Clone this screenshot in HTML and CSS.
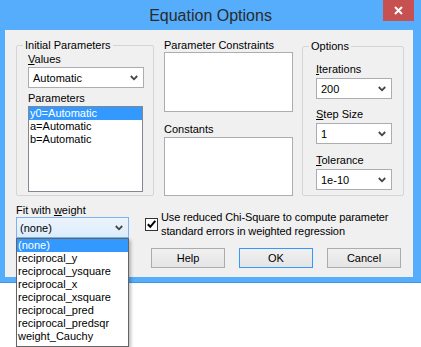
FILE: index.html
```html
<!DOCTYPE html>
<html>
<head>
<meta charset="utf-8">
<link rel="stylesheet" href="styles.css">
</head>
<body>
<div class="page">
<div class="window">
  <div class="titlebar">
    <span class="title">Equation Options</span>
    <div class="close">
      <svg width="9" height="9" viewBox="0 0 9 9"><path d="M1 1 L8 8 M8 1 L1 8" stroke="#fff" stroke-width="2" fill="none"/></svg>
    </div>
  </div>
  <div class="client">
    <div class="top-row">
      <fieldset class="group group-init">
        <legend>Initial Parameters</legend>
        <div class="inner inner-init">
          <div class="lbl"><u>V</u>alues</div>
          <div class="combo combo-values"><span>Automatic</span><svg class="chev" width="8" height="6" viewBox="0 0 8 6"><path d="M0.8 1 L4 4.3 L7.2 1" stroke="#444" stroke-width="1.8" fill="none"/></svg></div>
          <div class="lbl lbl-params">Parameters</div>
          <div class="listbox">
            <div class="item sel">y0=Automatic</div>
            <div class="item">a=Automatic</div>
            <div class="item">b=Automatic</div>
          </div>
        </div>
      </fieldset>
      <div class="mid">
        <div class="lbl">Parameter Constraints</div>
        <div class="edit edit1"></div>
        <div class="lbl lbl-const">Constants</div>
        <div class="edit edit2"></div>
      </div>
      <fieldset class="group group-opt">
        <legend>Options</legend>
        <div class="inner inner-opt">
          <div class="lbl lbl-first"><u>I</u>terations</div>
          <div class="combo combo-opt"><span>200</span><svg class="chev" width="8" height="6" viewBox="0 0 8 6"><path d="M0.8 1 L4 4.3 L7.2 1" stroke="#444" stroke-width="1.8" fill="none"/></svg></div>
          <div class="lbl lbl-next"><u>S</u>tep Size</div>
          <div class="combo combo-opt"><span>1</span><svg class="chev" width="8" height="6" viewBox="0 0 8 6"><path d="M0.8 1 L4 4.3 L7.2 1" stroke="#444" stroke-width="1.8" fill="none"/></svg></div>
          <div class="lbl lbl-last"><u>T</u>olerance</div>
          <div class="combo combo-opt"><span>1e-10</span><svg class="chev" width="8" height="6" viewBox="0 0 8 6"><path d="M0.8 1 L4 4.3 L7.2 1" stroke="#444" stroke-width="1.8" fill="none"/></svg></div>
        </div>
      </fieldset>
    </div>
    <div class="bottom-row">
      <div class="weight">
        <div class="lbl">Fit with <u>w</u>eight</div>
        <div class="combo combo-focus"><span>(none)</span><svg class="chev" width="8" height="6" viewBox="0 0 8 6"><path d="M0.8 1 L4 4.3 L7.2 1" stroke="#444" stroke-width="1.8" fill="none"/></svg></div>
        <div class="droplist">
          <div class="ditem sel">(none)</div>
          <div class="ditem">reciprocal_y</div>
          <div class="ditem">reciprocal_ysquare</div>
          <div class="ditem">reciprocal_x</div>
          <div class="ditem">reciprocal_xsquare</div>
          <div class="ditem">reciprocal_pred</div>
          <div class="ditem">reciprocal_predsqr</div>
          <div class="ditem">weight_Cauchy</div>
        </div>
      </div>
      <div class="right">
        <div class="check-row">
          <div class="checkbox"><svg width="11" height="11" viewBox="0 0 11 11"><path d="M1.8 5.2 L4.3 7.8 L9.3 1.8" stroke="#000" stroke-width="2" fill="none"/></svg></div>
          <div class="check-text">Use reduced Chi-Square to compute parameter<br>standard errors in weighted regression</div>
        </div>
        <div class="buttons">
          <div class="btn">Help</div>
          <div class="btn btn-default">OK</div>
          <div class="btn">Cancel</div>
        </div>
      </div>
    </div>
  </div>
</div>
</div>
</body>
</html>
```
FILE: styles.css
```css
html, body {
  margin: 0;
  padding: 0;
  background: #ffffff;
}
body {
  font-family: "Liberation Sans", Arial, sans-serif;
  font-size: 11px;
  color: #000;
}
.page {
  width: 421px;
  height: 347px;
  position: relative;
}
.window {
  width: 421px;
  height: 283px;
  background: #55adfb;
  box-sizing: border-box;
  border-bottom: 1px solid #4096e6;
}
.titlebar {
  height: 30px;
  position: relative;
  display: flex;
  align-items: center;
  justify-content: center;
}
.title {
  font-size: 16px;
  color: #2b2b2b;
  margin-top: 1px;
}
.close {
  position: absolute;
  top: 0;
  right: 7px;
  width: 31px;
  height: 21px;
  background: #c75050;
  display: flex;
  align-items: center;
  justify-content: center;
}
.client {
  margin: 0 8px 0 5px;
  height: 247px;
  background: #f0f0f0;
  box-sizing: border-box;
  padding-left: 11px;
  position: relative;
}
.lbl {
  line-height: 14px;
  height: 14px;
  white-space: nowrap;
}
u {
  text-decoration-thickness: 1px;
  text-underline-offset: 1px;
}
.top-row {
  display: flex;
  align-items: flex-start;
  padding-top: 8px;
}
.group {
  margin: 0;
  padding: 0;
  border: 1px solid #d5d5d5;
  border-radius: 2px;
  min-inline-size: 0;
  box-sizing: border-box;
}
.group legend {
  margin-left: 6px;
  padding: 0 2px;
  line-height: 14px;
  height: 14px;
  white-space: nowrap;
}
.group-init {
  width: 138px;
}
.inner-init {
  padding: 0 9px 3px 11px;
}
.combo {
  height: 21px;
  box-sizing: border-box;
  border: 1px solid #abadb3;
  background: #fff;
  display: flex;
  align-items: center;
  justify-content: space-between;
  padding: 0 5px 0 4px;
  margin-top: 1px;
}
.combo span {
  line-height: 14px;
}
.chev {
  display: block;
}
.lbl-params {
  margin-top: 3px;
}
.listbox {
  margin-top: 1px;
  width: 115px;
  height: 86px;
  box-sizing: border-box;
  border: 1px solid #828790;
  background: #fff;
}
.item {
  height: 13px;
  line-height: 13px;
  padding-left: 1px;
  white-space: nowrap;
}
.sel {
  background: #3399ff;
  color: #fff;
}
.mid {
  width: 129px;
  margin-left: 10px;
}
.edit {
  box-sizing: border-box;
  border: 1px solid #abadb3;
  background: #fff;
}
.edit1 {
  height: 60px;
}
.lbl-const {
  margin-top: 10px;
}
.edit2 {
  margin-top: 1px;
  height: 59px;
}
.group-opt {
  width: 102px;
  margin-left: 9px;
  margin-top: 1px;
}
.inner-opt {
  padding: 0 11px 5px 13px;
}
.combo-opt {
  margin-top: 2px;
}
.lbl-first {
  margin-top: 9px;
}
.lbl-next {
  margin-top: 8px;
}
.lbl-last {
  margin-top: 9px;
}
.bottom-row {
  display: flex;
  align-items: flex-start;
  margin-top: 7px;
}
.weight {
  width: 113px;
  position: relative;
}
.combo-focus {
  margin-top: 0;
  border-color: #7eb4ea;
  background: linear-gradient(#ecf4fc, #dcecfc);
  padding-left: 3px;
}
.droplist {
  position: absolute;
  left: 0;
  top: 35px;
  width: 113px;
  height: 109px;
  box-sizing: border-box;
  border: 1px solid #646464;
  background: #fff;
  box-shadow: 2px 2px 3px rgba(0, 0, 0, 0.25);
  z-index: 2;
}
.ditem {
  height: 13px;
  line-height: 13px;
  padding-left: 1px;
  white-space: nowrap;
}
.right {
  margin-left: 16px;
  margin-top: 7px;
}
.check-row {
  display: flex;
  align-items: center;
}
.checkbox {
  width: 13px;
  height: 13px;
  box-sizing: border-box;
  border: 1px solid #333;
  background: #fff;
  display: flex;
  align-items: center;
  justify-content: center;
}
.check-text {
  margin-left: 3px;
  line-height: 14px;
  white-space: nowrap;
  letter-spacing: -0.1px;
}
.buttons {
  display: flex;
  gap: 14px;
  margin-top: 10px;
  margin-left: 6px;
}
.btn {
  width: 74px;
  height: 20px;
  box-sizing: border-box;
  border: 1px solid #acacac;
  background: linear-gradient(#f0f0f0, #e5e5e5);
  display: flex;
  align-items: center;
  justify-content: center;
}
.btn-default {
  border-color: #3399ff;
}
```
